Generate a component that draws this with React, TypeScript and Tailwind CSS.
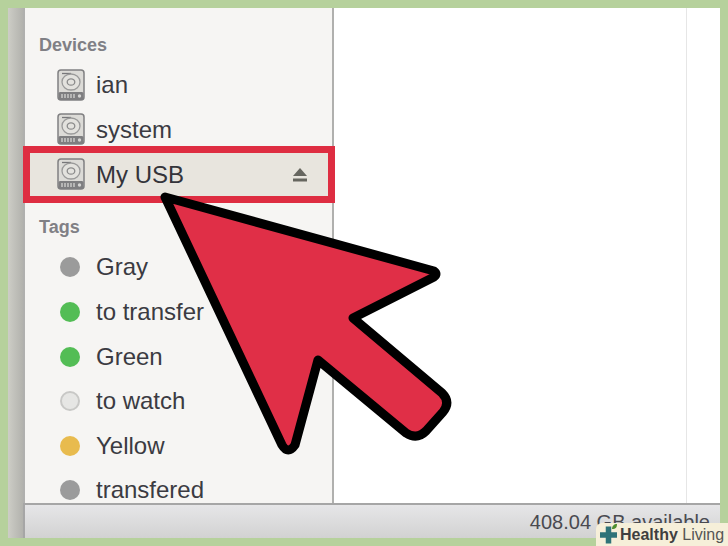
const font = { fontFamily: '"Liberation Sans", Arial, sans-serif' };

function DiskIcon() {
  return (
    <svg width="30" height="33" viewBox="0 0 30 33" className="shrink-0">
      <rect x="1" y="1" width="26" height="30" rx="3" fill="#dcdbd7" stroke="#808082" strokeWidth="1.5" />
      <path d="M5 4.5h9" stroke="#77777a" strokeWidth="1.3" />
      <ellipse cx="14" cy="13" rx="9" ry="8" fill="#e3e2de" stroke="#9a9a9a" strokeWidth="1.3" />
      <ellipse cx="14" cy="13" rx="3.8" ry="3.2" fill="none" stroke="#8c8c8c" strokeWidth="1.3" />
      <rect x="1.5" y="23" width="25" height="8" rx="1.5" fill="#7e7e80" />
      <path d="M5 25v4M8 25v4M11 25v4M14 25v4M17 25v4" stroke="#d4d4d2" strokeWidth="1.3" />
      <circle cx="22.5" cy="27" r="1.7" fill="#d4d4d2" />
    </svg>
  );
}

function EjectIcon() {
  return (
    <svg width="16" height="16" viewBox="0 0 16 16" className="shrink-0">
      <path d="M8 1L15 9H1z" fill="#66665f" />
      <rect x="1" y="11.5" width="14" height="3" fill="#66665f" />
    </svg>
  );
}

function DeviceRow({ name }: { name: string }) {
  return (
    <div className="flex h-[44.6px] items-center gap-[9px] pl-[32px]">
      <DiskIcon />
      <span className="text-[24px] leading-none text-[#3b3b42]">{name}</span>
    </div>
  );
}

function TagRow({ name, color }: { name: string; color: string }) {
  return (
    <div className="flex h-[44.6px] items-center gap-[16px] pl-[35px]">
      <span className={`size-[20px] shrink-0 rounded-full ${color}`} />
      <span className="text-[24px] leading-none text-[#3b3b42]">{name}</span>
    </div>
  );
}

const tags = [
  { name: "Gray", color: "bg-[#9b9b9b]" },
  { name: "to transfer", color: "bg-[#53bd55]" },
  { name: "Green", color: "bg-[#53bd55]" },
  { name: "to watch", color: "bg-[#e6e6e4] border-2 border-[#c8c8c6]" },
  { name: "Yellow", color: "bg-[#e8bb4e]" },
  { name: "transfered", color: "bg-[#9b9b9b]" },
];

export default function App() {
  return (
    <div className="relative h-[546px] w-[728px] overflow-hidden bg-[#b6d19c] p-2" style={font}>
      <div className="flex h-[530px] w-[712px] flex-col bg-white">
        <div className="flex min-h-0 flex-1">
          <div className="w-[15px] shrink-0 bg-gradient-to-r from-[#cdcdc6] to-[#b2b2ad]" />
          <div className="w-[311px] shrink-0 border-l-2 border-r-2 border-[#b0b0ae] bg-[#f6f5f3]">
            <div className="pt-[27px]">
              <div className="pl-[14px] text-[18px] font-bold leading-[20px] text-[#808085]">Devices</div>
              <div className="pt-[8px]">
                <DeviceRow name="ian" />
                <DeviceRow name="system" />
                <div className="relative z-10 -ml-[2px] -mr-[3px] -mt-[6px] flex h-[57px] items-center justify-between border-[7px] border-[#de2d41] bg-[#e8e5de] pl-[27px] pr-[20px]">
                  <div className="flex items-center gap-[9px]">
                    <DiskIcon />
                    <span className="text-[24px] leading-none text-[#34343a]">My USB</span>
                  </div>
                  <EjectIcon />
                </div>
              </div>
              <div className="pl-[14px] pt-[14px] text-[18px] font-bold leading-[20px] text-[#808085]">Tags</div>
              <div className="pt-[8px]">
                {tags.map((t) => (
                  <TagRow key={t.name} name={t.name} color={t.color} />
                ))}
              </div>
            </div>
          </div>
          <div className="flex flex-1 justify-end">
            <div className="mr-[33px] w-px bg-[#e6e6e6]" />
          </div>
        </div>
        <div className="relative z-10 flex h-[35px] shrink-0">
          <div className="w-[15px] shrink-0 bg-gradient-to-r from-[#cdcdc6] to-[#b2b2ad]" />
          <div className="flex flex-1 justify-end border-l-2 border-t-2 border-[#a6a6a6] bg-gradient-to-b from-[#e6e6e8] to-[#d2d2d2] pr-[10px] pt-[5px]">
            <span className="text-[20px] leading-[24px] text-[#4a4a50]">408.04 GB available</span>
          </div>
        </div>
      </div>

      {/* Flecha roja encima de la lista */}
      <svg width="728" height="546" viewBox="0 0 728 546" className="absolute left-0 top-0 z-20">
        <path
          d="M165 197 L434 271 Q438 274 434 277 L353 318 L442 393 Q451 402 443 412 L426 431 Q417 440 406 433 L318 360 L295 445 Q288 455 282 445 Z"
          fill="#e02f47"
          stroke="#000"
          strokeWidth="9"
          strokeLinejoin="round"
        />
      </svg>

      {/* Marca de agua */}
      <div className="absolute bottom-0 right-0 z-30 flex h-[23px] w-[132px] items-center gap-[1px] rounded-tl-[6px] bg-[#f6efd9] pl-[2px]">
        <svg width="21" height="23" viewBox="0 0 21 23" className="shrink-0">
          <path d="M10.5 3.5v17M2 12h17" stroke="#2f7378" strokeWidth="5.5" />
          <path d="M14 6c0-3 2-5 5-5 0 3-1 5-5 5z" fill="#4f8f2f" />
        </svg>
        <span className="whitespace-nowrap text-[16px] leading-none text-[#555555]">
          <span className="font-bold text-[#3f3f3f]">Healthy</span> Living
        </span>
      </div>
    </div>
  );
}
